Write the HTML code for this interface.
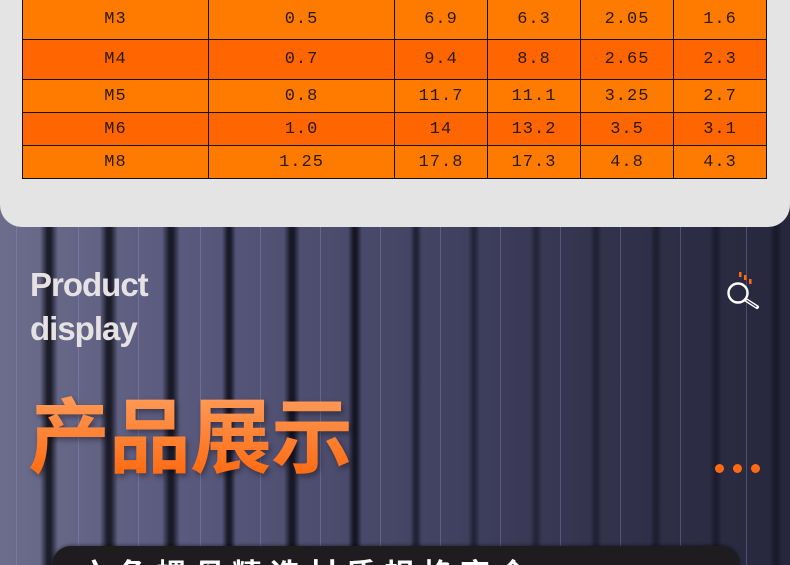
<!DOCTYPE html>
<html><head><meta charset="utf-8"><style>
*{margin:0;padding:0;box-sizing:border-box}
html,body{width:790px;height:565px;overflow:hidden}
body{position:relative;background:#2a2a40;font-family:"Liberation Serif","Noto Serif CJK SC",serif}
#bg{position:absolute;left:0;top:200px;width:790px;height:365px;background:linear-gradient(90deg,#6c6c8c 0%,#58587c 25%,#424262 55%,#30304a 80%,#26263c 100%)}
.bar{position:absolute;top:200px;height:365px;background:linear-gradient(90deg,rgba(0,0,0,0),rgba(5,5,12,.75) 40%,rgba(5,5,12,.75) 60%,rgba(0,0,0,0))}
.ln{position:absolute;top:200px;height:365px;width:1px;background:rgba(150,150,200,.35)}
#card{position:absolute;left:0;top:-20px;width:790px;height:247px;background:#e4e4e4;border-radius:0 0 22px 22px}
table{position:absolute;left:22px;top:-1px;border-collapse:collapse}
td{border:1px solid #111;text-align:center;font-family:"Liberation Mono",monospace;font-size:17px;letter-spacing:1px;color:#2a1a00;padding:0}
tr.a td{background:#ff7b00}tr.b td{background:#ff6500}
.en{position:absolute;left:30px;font-family:"Liberation Sans",sans-serif;font-weight:bold;font-size:33px;color:#e6e2e4;letter-spacing:-1px}
#cn{position:absolute;left:28px;top:386px;font-family:"Noto Sans CJK SC",sans-serif;font-weight:bold;font-size:82px;letter-spacing:-1px;background:linear-gradient(#ffa060,#ff6a10);-webkit-background-clip:text;color:transparent;line-height:1.1;filter:drop-shadow(2px 3px 3px rgba(0,0,0,.35))}
.dot{position:absolute;top:464px;width:9px;height:9px;border-radius:50%;background:#ff6a10}
#box{position:absolute;left:52px;top:546px;width:688px;height:19px;background:#1e1c1e;border-radius:20px 20px 0 0;box-shadow:0 -1px 3px rgba(0,0,0,.4);overflow:hidden}
#box span{position:absolute;left:28px;top:11px;line-height:30px;color:#fff;font-family:"Noto Sans CJK SC",sans-serif;font-weight:bold;font-size:30px;letter-spacing:8px;white-space:nowrap}
</style></head><body>
<div id="bg"></div>
<div class="bar" style="left:40px;width:18px"></div>
<div class="bar" style="left:100px;width:18px"></div>
<div class="bar" style="left:162px;width:18px"></div>
<div class="bar" style="left:222px;width:14px"></div>
<div class="bar" style="left:284px;width:16px"></div>
<div class="bar" style="left:348px;width:14px"></div>
<div class="bar" style="left:410px;width:12px;opacity:.7"></div>
<div class="bar" style="left:468px;width:12px;opacity:.6"></div>
<div class="bar" style="left:530px;width:12px;opacity:.5"></div>
<div class="bar" style="left:590px;width:12px;opacity:.5"></div>
<div class="bar" style="left:650px;width:12px;opacity:.5"></div>
<div class="bar" style="left:710px;width:12px;opacity:.5"></div>
<div class="bar" style="left:770px;width:12px;opacity:.5"></div>
<div class="ln" style="left:16px"></div><div class="ln" style="left:78px"></div><div class="ln" style="left:138px"></div><div class="ln" style="left:200px"></div><div class="ln" style="left:260px"></div><div class="ln" style="left:320px"></div><div class="ln" style="left:380px"></div><div class="ln" style="left:440px"></div><div class="ln" style="left:500px"></div><div class="ln" style="left:560px"></div><div class="ln" style="left:620px"></div><div class="ln" style="left:680px"></div><div class="ln" style="left:746px"></div>
<div id="card"></div>
<table>
<colgroup><col style="width:186px"><col style="width:186px"><col style="width:93px"><col style="width:93px"><col style="width:93px"><col style="width:93px"></colgroup>
<tr class="a" style="height:40px"><td>M3</td><td>0.5</td><td>6.9</td><td>6.3</td><td>2.05</td><td>1.6</td></tr>
<tr class="b" style="height:40px"><td>M4</td><td>0.7</td><td>9.4</td><td>8.8</td><td>2.65</td><td>2.3</td></tr>
<tr class="a" style="height:33px"><td>M5</td><td>0.8</td><td>11.7</td><td>11.1</td><td>3.25</td><td>2.7</td></tr>
<tr class="b" style="height:33px"><td>M6</td><td>1.0</td><td>14</td><td>13.2</td><td>3.5</td><td>3.1</td></tr>
<tr class="a" style="height:33px"><td>M8</td><td>1.25</td><td>17.8</td><td>17.3</td><td>4.8</td><td>4.3</td></tr>
</table>
<div class="en" style="top:266px">Product</div>
<div class="en" style="top:310px">display</div>
<svg style="position:absolute;left:720px;top:265px" width="50" height="50" viewBox="720 265 50 50">
<rect x="739" y="272" width="2.5" height="5" fill="#ff6a10"/><rect x="744" y="275" width="2.5" height="5" fill="#ff6a10"/><rect x="749" y="279" width="2.5" height="5" fill="#ff6a10"/>
<circle cx="738" cy="293" r="9.5" fill="none" stroke="#fff" stroke-width="2.4"/>
<line x1="746" y1="300" x2="757" y2="307" stroke="#fff" stroke-width="4" stroke-linecap="round"/>
<line x1="747" y1="300.5" x2="756" y2="306.5" stroke="#3a3a55" stroke-width="1.2" stroke-linecap="round"/>
</svg>
<div id="cn">产品展示</div>
<div class="dot" style="left:715px"></div><div class="dot" style="left:733px"></div><div class="dot" style="left:751px"></div>
<div id="box"><span>六角螺母精选材质规格齐全</span></div>
</body></html>
